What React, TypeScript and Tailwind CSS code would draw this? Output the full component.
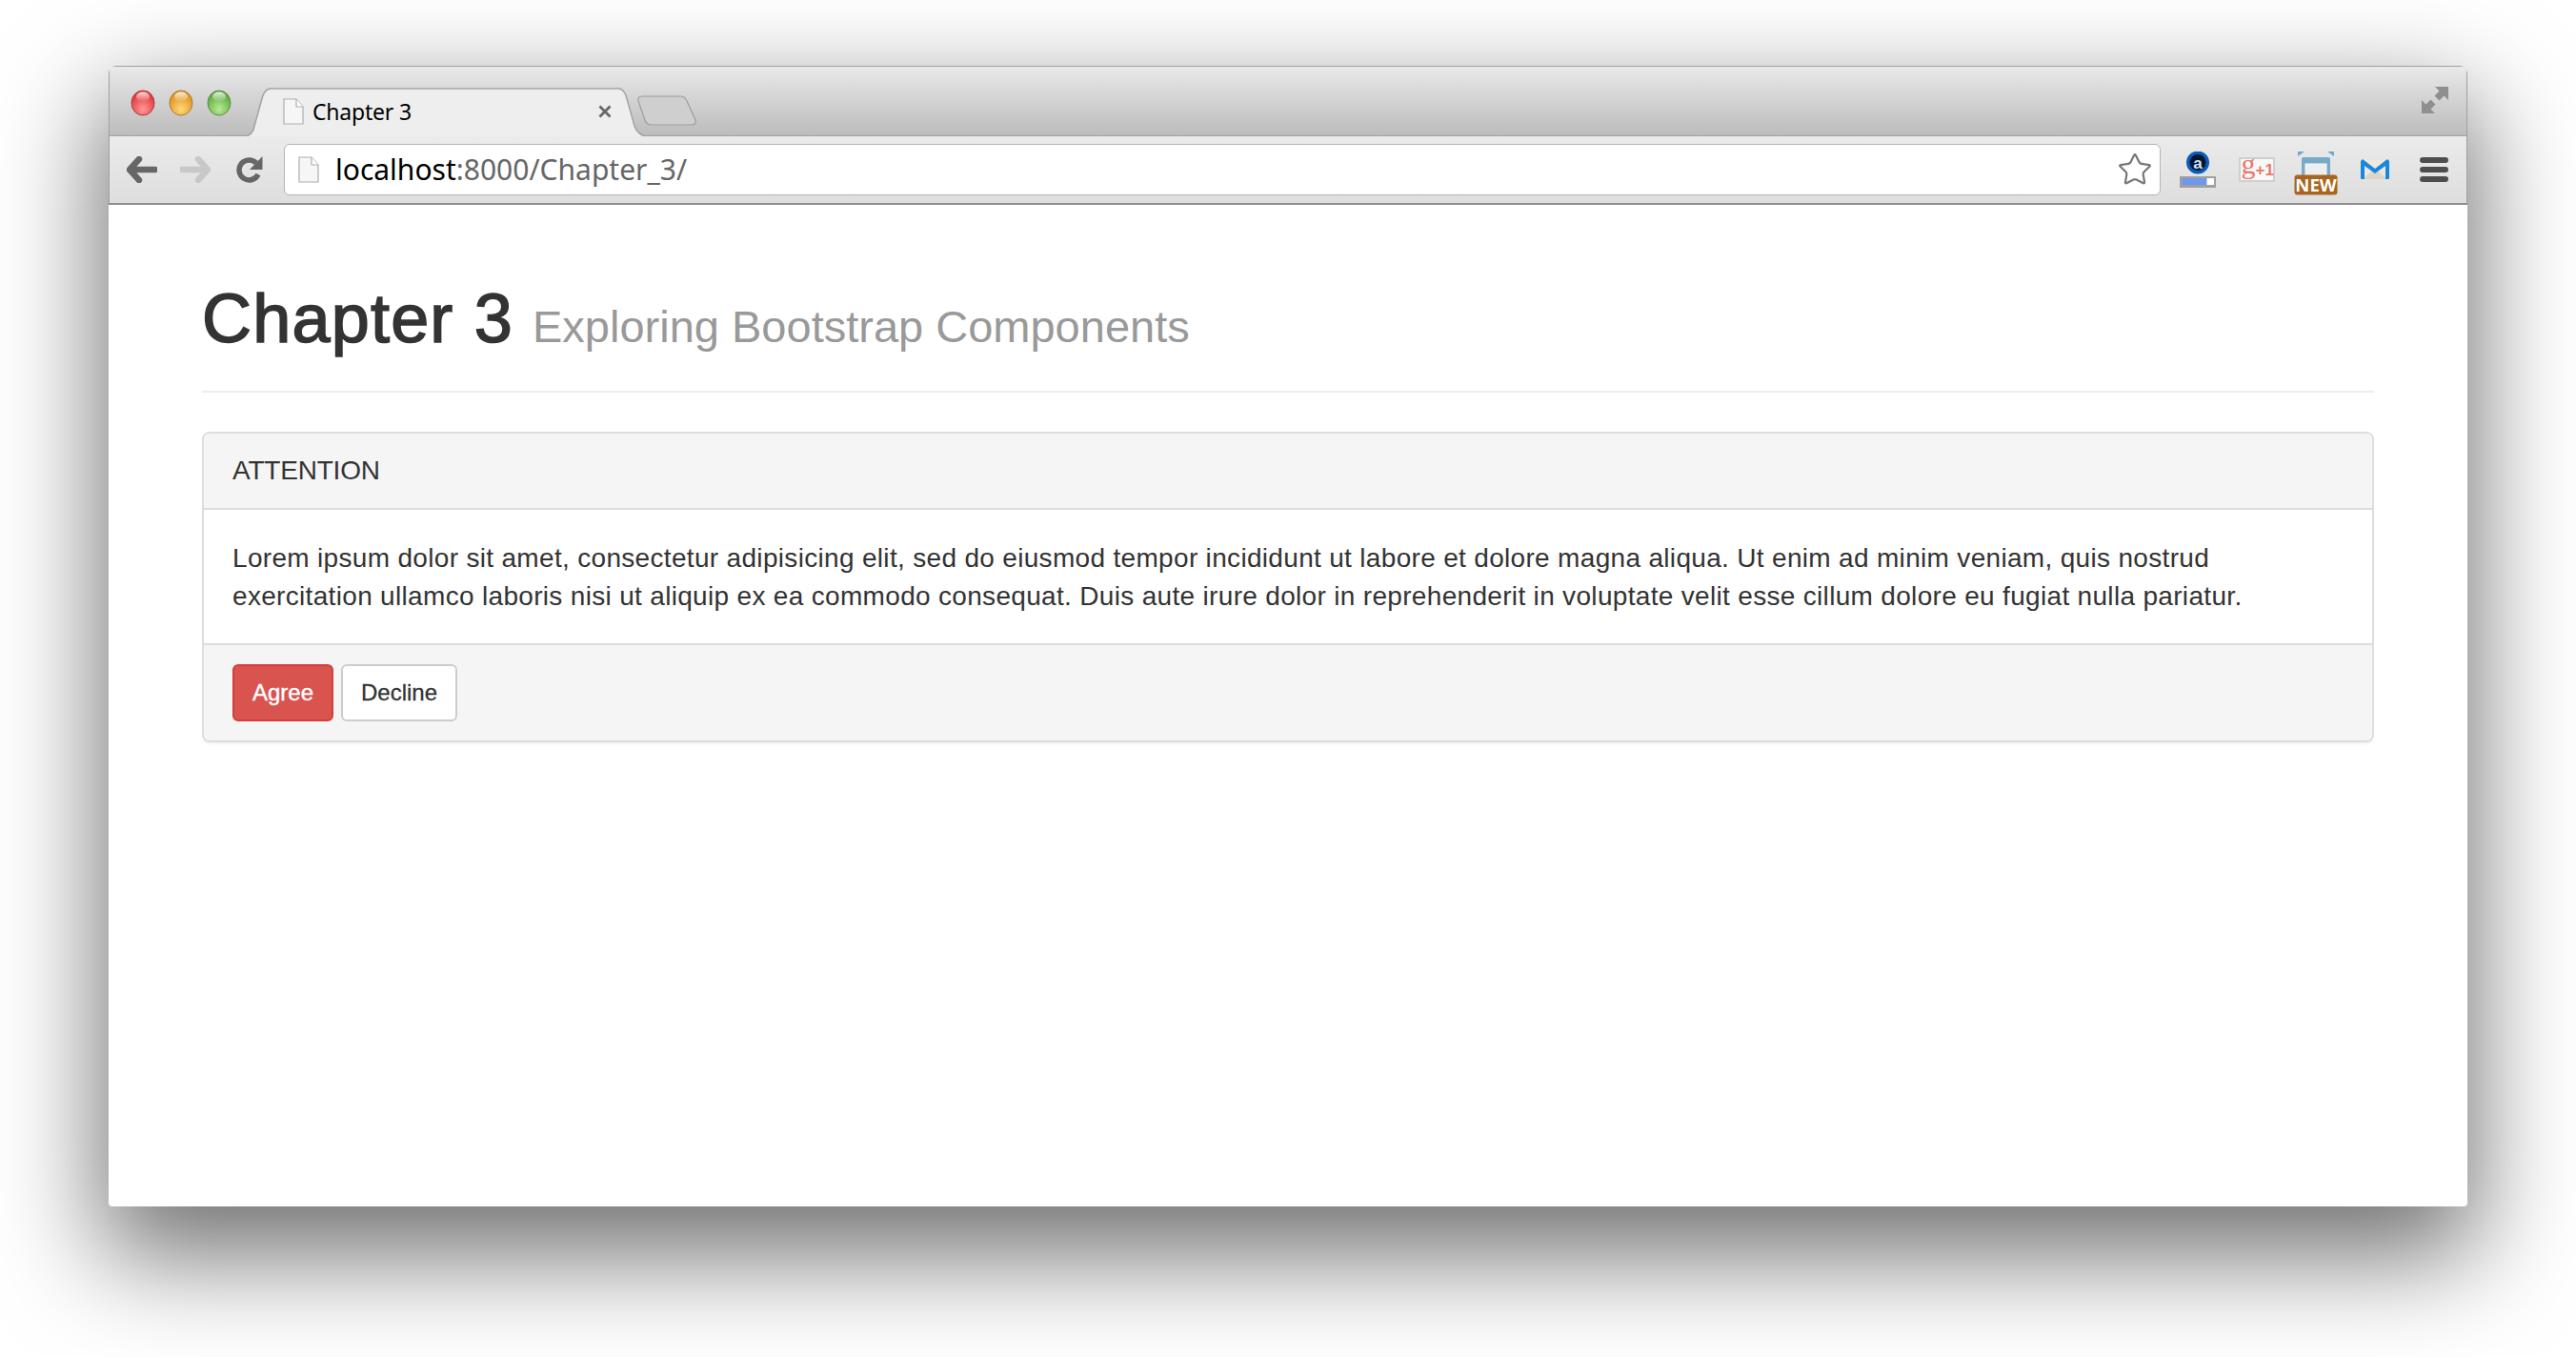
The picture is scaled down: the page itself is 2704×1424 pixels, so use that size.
import React from 'react';
import { Star } from 'lucide-react';

const FileIcon = ({ w, h }: { w: number; h: number }) => (
  <svg width={w} height={h} viewBox="0 0 22 28" className="shrink-0">
    <path d="M1 1h13l7 8v18H1z" fill="#f6f6f6" stroke="#adadad" strokeWidth="1.2" />
    <path d="M14 1v8h7" fill="#fff" stroke="#adadad" strokeWidth="1.2" />
  </svg>
);

const Light = ({ from, to, ring }: { from: string; to: string; ring: string }) => (
  <svg width="26" height="28" viewBox="0 0 26 28">
    <defs>
      <radialGradient id={`l${from.slice(1)}`} cx="50%" cy="75%" r="65%">
        <stop offset="0%" stopColor={to} />
        <stop offset="100%" stopColor={from} />
      </radialGradient>
      <linearGradient id={`s${from.slice(1)}`} x1="0" y1="0" x2="0" y2="1">
        <stop offset="0%" stopColor="#fff" stopOpacity="0.85" />
        <stop offset="100%" stopColor="#fff" stopOpacity="0" />
      </linearGradient>
    </defs>
    <ellipse cx="13" cy="14" rx="12" ry="13" fill={`url(#l${from.slice(1)})`} stroke={ring} strokeWidth="1" />
    <ellipse cx="13" cy="7.5" rx="7" ry="5" fill={`url(#s${from.slice(1)})`} />
  </svg>
);

const BackArrow = ({ color }: { color: string }) => (
  <svg width="32" height="28" viewBox="0 0 32 28">
    <path d="M13 3 3 14l10 11M4 14h26" fill="none" stroke={color} strokeWidth="6.5" strokeLinecap="round" strokeLinejoin="round" />
  </svg>
);

const ForwardArrow = ({ color }: { color: string }) => (
  <svg width="32" height="28" viewBox="0 0 32 28">
    <path d="M19 3l10 11-10 11M28 14H2" fill="none" stroke={color} strokeWidth="6.5" strokeLinecap="round" strokeLinejoin="round" />
  </svg>
);

const Reload = () => (
  <svg width="28" height="30" viewBox="0 0 28 30">
    <path d="M23 20A10.500 10.500 0 1 1 21 8" fill="none" stroke="#666" strokeWidth="5.500" />
    <path d="M27.500 1v14H14z" fill="#666" />
  </svg>
);

const AmazonIcon = () => (
  <svg width="38" height="38" viewBox="0 0 38 38">
    <circle cx="19" cy="11.500" r="12" fill="#0a5cb8" />
    <circle cx="19" cy="11.500" r="8.500" fill="#051430" />
    <text x="19" y="17.500" textAnchor="middle" fontSize="17" fontWeight="700" fill="#cfe3ff" fontFamily="Liberation Sans, sans-serif">a</text>
    <rect x="0" y="26" width="38" height="12" fill="#a0a0a0" />
    <rect x="2.500" y="28" width="26" height="7" fill="#6e97f0" />
    <rect x="28.500" y="28" width="7.500" height="7" fill="#fff" />
  </svg>
);

const PlusOneIcon = () => (
  <svg width="38" height="26" viewBox="0 0 38 26" className="overflow-visible">
    <rect x="1" y="1" width="36" height="24" fill="#f8f8f8" stroke="#cfcfcf" strokeWidth="2" />
    <text x="2.500" y="17" fontSize="30" fontWeight="400" fill="#e8776b" fontFamily="Liberation Serif, serif">g</text>
    <text x="17.500" y="19" fontSize="17" fontWeight="700" fill="#e8776b" fontFamily="Liberation Sans, sans-serif">+1</text>
  </svg>
);

const NewIcon = () => (
  <svg width="46" height="46" viewBox="0 0 46 46">
    <path d="M4 0h7L4 5zM42 0h-7l7 5z" fill="#6aa9d2" />
    <rect x="8" y="6" width="30" height="26" rx="2" fill="#78aacb" />
    <rect x="12" y="13" width="22" height="18" fill="#eeeeee" stroke="#fafafa" />
    <rect x="0.500" y="24.500" width="45" height="21" rx="3" fill="#a9651f" />
    <text x="23" y="42" textAnchor="middle" fontSize="18.500" fontWeight="700" fill="#fff" fontFamily="Open Sans, sans-serif">NEW</text>
  </svg>
);

const MailIcon = () => (
  <svg width="30" height="22" viewBox="0 0 30 22">
    <path d="M2 1h26v20H2z" fill="#eee9dc" />
    <path d="M2 21 15 10l13 11z" fill="#dcd6c6" />
    <path d="M0 2v18a1 1 0 0 0 1 1h3V7l11 8 11-8v14h3a1 1 0 0 0 1-1V2l-2-2-13 10L2 0z" fill="#1688e0" />
  </svg>
);

const ExpandIcon = () => (
  <svg width="28" height="28" viewBox="0 0 28 28">
    <path d="M28 0v14l-4.500-4.500-5 5-5-5 5-5L14 0zM0 28V14l4.500 4.500 5-5 5 5-5 5L14 28z" fill="#8f8f8f" />
  </svg>
);

const Panel = () => (
  <div className="border-2 border-[#dddddd] rounded-[8px] shadow-[0_2px_2px_rgba(0,0,0,0.05)] overflow-hidden">
    <div className="h-[80px] flex items-center px-[30px] bg-[#f5f5f5] border-b-2 border-[#dddddd] text-[28px] tracking-[-0.2px] text-[#333333]">
      ATTENTION
    </div>
    <div className="px-[30px] pt-[31px] pb-[29px] text-[28px] leading-[40px] tracking-[0.32px] text-[#333333]">
      Lorem ipsum dolor sit amet, consectetur adipisicing elit, sed do eiusmod tempor incididunt ut labore et dolore magna aliqua. Ut enim ad minim veniam, quis nostrud exercitation ullamco laboris nisi ut aliquip ex ea commodo consequat. Duis aute irure dolor in reprehenderit in voluptate velit esse cillum dolore eu fugiat nulla pariatur.
    </div>
    <div className="flex gap-[8px] px-[30px] pt-[20px] pb-[20px] bg-[#f5f5f5] border-t-2 border-[#dddddd]">
      <button className="h-[60px] w-[106px] rounded-[6px] border-2 border-[#d43f3a] bg-[#d9534f] text-[24px] text-white [-webkit-text-stroke:0.4px_#ffffff]">Agree</button>
      <button className="h-[60px] w-[122px] rounded-[6px] border-2 border-[#cccccc] bg-white text-[24px] text-[#333333] [-webkit-text-stroke:0.3px_#333333]">Decline</button>
    </div>
  </div>
);

export default function App() {
  return (
    <div className="w-[2704px] h-[1424px] bg-white overflow-hidden pt-[69px] pl-[114px] font-['Liberation_Sans',Arial,sans-serif]">
      <div className="w-[2476px] h-[1197px] flex flex-col rounded-t-[8px] rounded-b-[4px] bg-white shadow-[0_44px_110px_8px_rgba(0,0,0,0.56)] overflow-hidden">
        {/* title bar */}
        <div className="h-[74px] shrink-0 flex items-end bg-linear-to-b from-[#e9e9e9] to-[#bcbcbc] border border-[#a0a0a0]">
          <div className="flex items-center gap-[14px] pl-[22px] w-[145px] self-start pt-[24px] shrink-0">
            <Light from="#e0353a" to="#ff9a95" ring="#b0383a" />
            <Light from="#e09120" to="#ffd97a" ring="#b07c2a" />
            <Light from="#5da83e" to="#b9ec95" ring="#5f8f45" />
          </div>
          <div className="relative w-[416px] h-[50px] shrink-0 flex items-center pl-[37px] pr-[34px]">
            <svg width="416" height="51" viewBox="0 0 416 51" className="absolute left-0 top-0">
              <path d="M0 51c3-1 5-3 6-6L16 8C18 3 22 0 28 0h358c5 0 9 3 11 8l9 32c2 6 5 10 10 11z" fill="#eeeeee" />
              <path d="M0 50c3-1 5-3 6-6L16 8C18 3 22 0 28 1h358c5-1 9 2 11 7l9 32c2 6 5 9 10 10" fill="none" stroke="#a3a3a3" strokeWidth="1.500" />
            </svg>
            <div className="relative flex items-center gap-[9px] flex-1 text-[23px] tracking-[-0.2px] text-black font-['Noto_Sans',sans-serif]">
              <FileIcon w={22} h={28} />
              <span>Chapter 3</span>
            </div>
            <svg width="14" height="14" viewBox="0 0 14 14" className="relative">
              <path d="M1.500 1.500l11 11M12.500 1.500l-11 11" stroke="#666" strokeWidth="2.800" />
            </svg>
          </div>
          <svg width="64" height="32" viewBox="0 0 64 32" className="mb-[10px] -ml-[8px] shrink-0">
            <path d="M2 6C1 3 3 1 6 1h40c4 0 6 2 7 5l9 20c1 3-1 5-4 5H16c-4 0-6-2-7-5z" fill="#cfcfcf" stroke="#9d9d9d" strokeWidth="1.200" />
          </svg>
          <div className="flex-1 self-start flex justify-end pt-[21px] pr-[19px]">
            <ExpandIcon />
          </div>
        </div>
        {/* toolbar */}
        <div className="h-[70px] shrink-0 flex items-center bg-linear-to-b from-[#ebebeb] to-[#dedede] border-x border-[#a0a0a0]">
          <div className="flex items-center pl-[18px] w-[183px] shrink-0">
            <BackArrow color="#666666" />
            <div className="ml-[24px]"><ForwardArrow color="#c8c8c8" /></div>
            <div className="ml-[27px]"><Reload /></div>
          </div>
          <div className="w-[1970px] h-[54px] shrink-0 flex items-center bg-white border border-[#b4b4b4] rounded-[6px] pl-[14px] pr-[7px]">
            <FileIcon w={22} h={30} />
            <div className="flex-1 pl-[17px] text-[30px] leading-none text-[#666666] font-['Noto_Sans',sans-serif]">
              <span className="text-black">localhost</span>:8000/Chapter_3/
            </div>
            <Star size={38} strokeWidth={1.4} color="#777777" fill="#ffffff" />
          </div>
          <div className="flex items-center flex-1 pl-[20px]">
            <div className="w-[38px] shrink-0"><AmazonIcon /></div>
            <div className="ml-[24px] shrink-0"><PlusOneIcon /></div>
            <div className="ml-[20px] shrink-0 mt-[8px]"><NewIcon /></div>
            <div className="ml-[24px] shrink-0"><MailIcon /></div>
            <svg width="30" height="26" viewBox="0 0 30 26" className="ml-[32px] shrink-0">
              <path d="M3 3h24M3 13h24M3 23h24" stroke="#4d4d4d" strokeWidth="6" strokeLinecap="round" />
            </svg>
          </div>
        </div>
        {/* page */}
        <div className="flex-1 px-[98px] pt-[80px] text-[#333333] border-t-2 border-[#8e8e8e]">
          <div className="pb-[28px] border-b-2 border-[#eeeeee] mb-[41px]">
            <h1 className="text-[72px] leading-[79px] font-normal text-[#333333]">
              <span className="tracking-[1.2px] [-webkit-text-stroke:1.6px_#333333]">Chapter 3</span> <small className="text-[47px] font-normal text-[#999999]">Exploring Bootstrap Components</small>
            </h1>
          </div>
          <Panel />
        </div>
      </div>
    </div>
  );
}
